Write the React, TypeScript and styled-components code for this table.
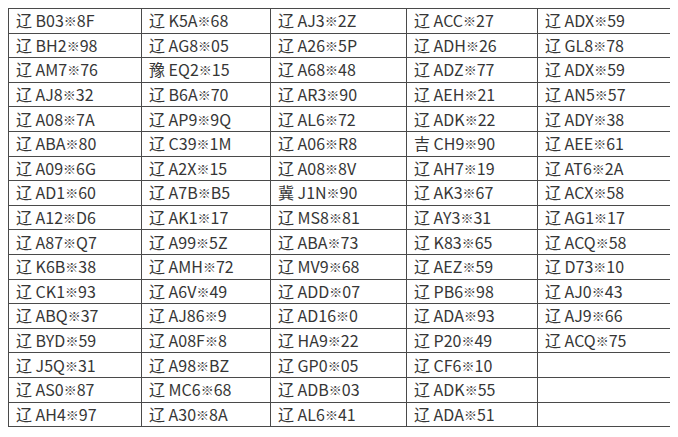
import React from "react";
import styled, { createGlobalStyle } from "styled-components";

const GlobalStyle = createGlobalStyle`
  body {
    margin: 8px;
    background: #ffffff;
  }
`;

const Table = styled.table`
  border-collapse: collapse;
  table-layout: fixed;
  width: 662px;
  font-family: "Noto Sans CJK SC", "Noto Sans", sans-serif;
  font-size: 16px;
  color: #363636;
`;

const Col = styled.col<{ $w: number }>`
  width: ${(p) => p.$w}px;
`;

const Row = styled.tr`
  height: 24.6px;
`;

const Cell = styled.td`
  border: 1.6px solid #4a4a4a;
  padding: 0 0 0 7px;
  line-height: 22px;
  white-space: nowrap;
  overflow: hidden;
  vertical-align: middle;
`;

const Mark = styled.span`
  display: inline-block;
  font-size: 13px;
  width: 13px;
  text-align: center;
  vertical-align: 1px;
  color: #444444;
`;

const columns: string[][] = [
  [
    "辽 B03※8F", "辽 BH2※98", "辽 AM7※76", "辽 AJ8※32", "辽 A08※7A", "辽 ABA※80",
    "辽 A09※6G", "辽 AD1※60", "辽 A12※D6", "辽 A87※Q7", "辽 K6B※38", "辽 CK1※93",
    "辽 ABQ※37", "辽 BYD※59", "辽 J5Q※31", "辽 AS0※87", "辽 AH4※97",
  ],
  [
    "辽 K5A※68", "辽 AG8※05", "豫 EQ2※15", "辽 B6A※70", "辽 AP9※9Q", "辽 C39※1M",
    "辽 A2X※15", "辽 A7B※B5", "辽 AK1※17", "辽 A99※5Z", "辽 AMH※72", "辽 A6V※49",
    "辽 AJ86※9", "辽 A08F※8", "辽 A98※BZ", "辽 MC6※68", "辽 A30※8A",
  ],
  [
    "辽 AJ3※2Z", "辽 A26※5P", "辽 A68※48", "辽 AR3※90", "辽 AL6※72", "辽 A06※R8",
    "辽 A08※8V", "冀 J1N※90", "辽 MS8※81", "辽 ABA※73", "辽 MV9※68", "辽 ADD※07",
    "辽 AD16※0", "辽 HA9※22", "辽 GP0※05", "辽 ADB※03", "辽 AL6※41",
  ],
  [
    "辽 ACC※27", "辽 ADH※26", "辽 ADZ※77", "辽 AEH※21", "辽 ADK※22", "吉 CH9※90",
    "辽 AH7※19", "辽 AK3※67", "辽 AY3※31", "辽 K83※65", "辽 AEZ※59", "辽 PB6※98",
    "辽 ADA※93", "辽 P20※49", "辽 CF6※10", "辽 ADK※55", "辽 ADA※51",
  ],
  [
    "辽 ADX※59", "辽 GL8※78", "辽 ADX※59", "辽 AN5※57", "辽 ADY※38", "辽 AEE※61",
    "辽 AT6※2A", "辽 ACX※58", "辽 AG1※17", "辽 ACQ※58", "辽 D73※10", "辽 AJ0※43",
    "辽 AJ9※66", "辽 ACQ※75", "", "", "",
  ],
];

const widths = [133, 129, 136, 131, 133];
const rowCount = 17;

const Plate: React.FC<{ text: string }> = ({ text }) => {
  if (!text) return null;
  const [head, tail] = text.split("※");
  return (
    <>
      {head}
      <Mark>※</Mark>
      {tail}
    </>
  );
};

const App: React.FC = () => (
  <>
    <GlobalStyle />
    <Table>
      <colgroup>
        {widths.map((w, i) => (
          <Col key={i} $w={w} />
        ))}
      </colgroup>
      <tbody>
        {Array.from({ length: rowCount }).map((_, r) => (
          <Row key={r}>
            {columns.map((col, c) => (
              <Cell key={c}>
                <Plate text={col[r]} />
              </Cell>
            ))}
          </Row>
        ))}
      </tbody>
    </Table>
  </>
);

export default App;
